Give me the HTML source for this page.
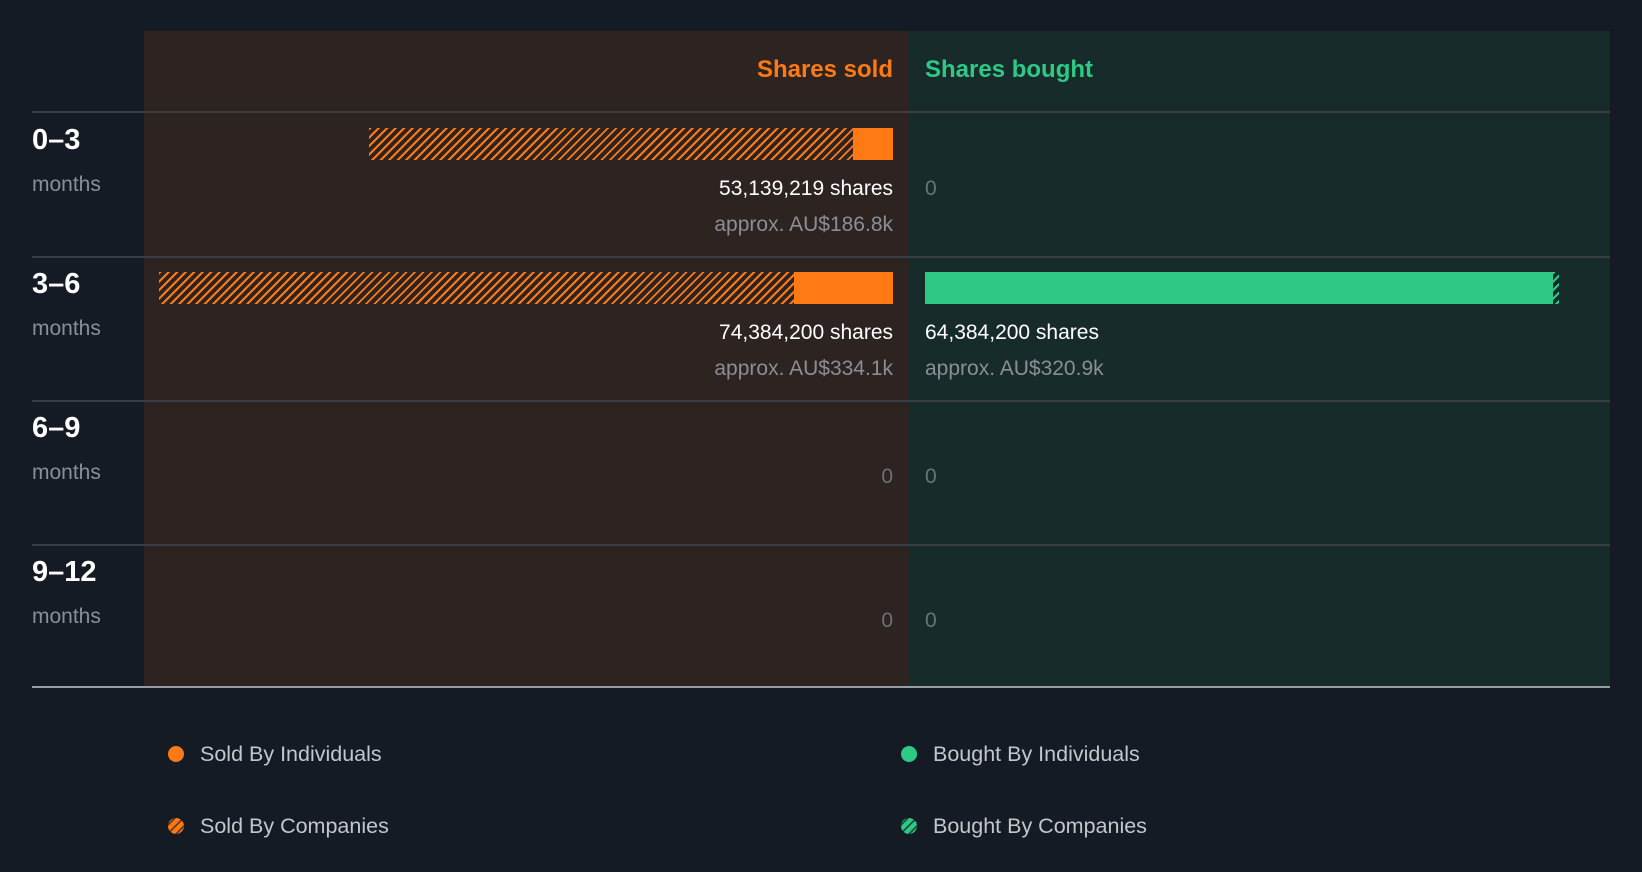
<!DOCTYPE html>
<html><head><meta charset="utf-8"><style>
*{margin:0;padding:0;box-sizing:border-box}
body{width:1642px;height:872px;background:#151b24;font-family:"Liberation Sans",Arial,sans-serif;position:relative;overflow:hidden}
.a{position:absolute}
.lp{left:144px;top:31px;width:765px;height:656px;background:#2d2321}
.rp{left:909px;top:31px;width:701px;height:656px;background:#172b2b}
.hl{left:32px;width:1578px;height:2px;background:#3a3d41}
.h{font-weight:bold;font-size:24px;top:56px}
.lab{left:32px;font-weight:bold;font-size:29px;color:#fff}
.mo{left:32px;font-size:21px;color:#8a8f95}
.r{text-align:right;right:749px}
.l{left:925px}
.sh{font-size:21px;color:#fff}
.ap{font-size:21px;color:#8a8f95}
.z{font-size:21px;color:#6b7275}
.ho{background:repeating-linear-gradient(135deg,#ff7a14 0 2px,transparent 2px 6px)}
.hg{background:repeating-linear-gradient(135deg,#2ec985 0 2px,transparent 2px 6px)}
.dot{width:16px;height:16px;border-radius:50%}
.lg{font-size:21.5px;color:#c3c6ca}
</style></head><body>
<div class="a lp"></div><div class="a rp"></div>
<div class="a h" style="right:749px;color:#ff7a14">Shares sold</div>
<div class="a h" style="left:925px;color:#2ec985">Shares bought</div>
<div class="a hl" style="top:111px"></div>
<div class="a hl" style="top:256px"></div>
<div class="a hl" style="top:400px"></div>
<div class="a hl" style="top:544px"></div>
<div class="a hl" style="top:686px;background:#9a9ea3"></div>

<div class="a lab" style="top:124px">0–3</div><div class="a mo" style="top:173px">months</div>
<div class="a lab" style="top:268px">3–6</div><div class="a mo" style="top:317px">months</div>
<div class="a lab" style="top:412px">6–9</div><div class="a mo" style="top:461px">months</div>
<div class="a lab" style="top:556px">9–12</div><div class="a mo" style="top:605px">months</div>

<div class="a ho" style="left:369px;top:128px;width:484px;height:32px"></div>
<div class="a" style="left:853px;top:128px;width:40px;height:32px;background:#ff7a14"></div>
<div class="a sh r" style="top:177px">53,139,219 shares</div>
<div class="a ap r" style="top:213px">approx. AU$186.8k</div>
<div class="a z l" style="top:177px">0</div>

<div class="a ho" style="left:159px;top:272px;width:635px;height:32px"></div>
<div class="a" style="left:794px;top:272px;width:99px;height:32px;background:#ff7a14"></div>
<div class="a" style="left:925px;top:272px;width:628px;height:32px;background:#2ec985"></div>
<div class="a hg" style="left:1553px;top:272px;width:6px;height:32px"></div>
<div class="a sh r" style="top:321px">74,384,200 shares</div>
<div class="a ap r" style="top:357px">approx. AU$334.1k</div>
<div class="a sh l" style="top:321px">64,384,200 shares</div>
<div class="a ap l" style="top:357px">approx. AU$320.9k</div>

<div class="a z r" style="top:465px">0</div><div class="a z l" style="top:465px">0</div>
<div class="a z r" style="top:609px">0</div><div class="a z l" style="top:609px">0</div>

<div class="a dot" style="left:168px;top:746px;background:#ff7a14"></div>
<div class="a lg" style="left:200px;top:742px">Sold By Individuals</div>
<div class="a dot" style="left:901px;top:746px;background:#2ec985"></div>
<div class="a lg" style="left:933px;top:742px">Bought By Individuals</div>
<div class="a dot" style="left:168px;top:818px;background:repeating-linear-gradient(135deg,#ff7a14 0 4px,#6b3a1a 4px 6px)"></div>
<div class="a lg" style="left:200px;top:814px">Sold By Companies</div>
<div class="a dot" style="left:901px;top:818px;background:repeating-linear-gradient(135deg,#2ec985 0 4px,#17503a 4px 6px)"></div>
<div class="a lg" style="left:933px;top:814px">Bought By Companies</div>
</body></html>
